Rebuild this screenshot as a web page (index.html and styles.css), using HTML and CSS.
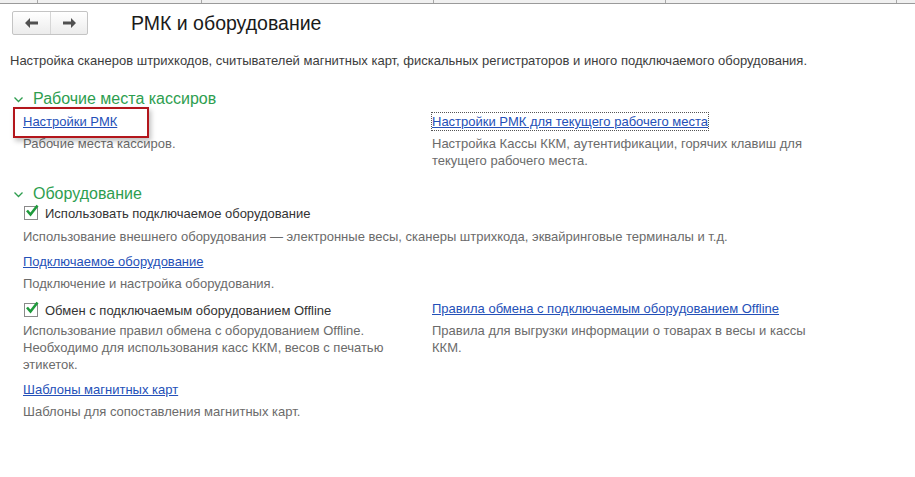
FILE: index.html
```html
<!DOCTYPE html>
<html lang="ru">
<head>
<meta charset="utf-8">
<title>РМК и оборудование</title>
<link rel="stylesheet" href="styles.css">
</head>
<body>
<div class="tabs">
  <div class="tab" style="width:37px"></div>
  <div class="tab" style="width:163px"></div>
  <div class="tab" style="width:231px"></div>
  <div class="tab" style="width:231px"></div>
  <div class="tab" style="width:230px"></div>
  <div class="tab tab-last"></div>
</div>

<div class="header">
  <div class="nav">
    <button class="nav-btn" type="button">
      <svg width="14" height="10" viewBox="0 0 14 10"><path d="M0 5 L5 0 L5 3.5 L13 3.5 L13 6.5 L5 6.5 L5 10 Z" fill="#505050"/></svg>
    </button>
    <button class="nav-btn" type="button">
      <svg width="14" height="10" viewBox="0 0 14 10"><path d="M14 5 L9 0 L9 3.5 L1 3.5 L1 6.5 L9 6.5 L9 10 Z" fill="#505050"/></svg>
    </button>
  </div>
  <h1 class="title">РМК и оборудование</h1>
</div>

<p class="intro">Настройка сканеров штрихкодов, считывателей магнитных карт, фискальных регистраторов и иного подключаемого оборудования.</p>

<div class="section">
  <div class="section-head">
    <svg class="chevron" width="9" height="6" viewBox="0 0 9 6"><path d="M0.5 0.5 L4.5 4.5 L8.5 0.5" fill="none" stroke="#2e9e4f" stroke-width="1.3"/></svg>
    <span>Рабочие места кассиров</span>
  </div>
  <div class="grid first-grid">
    <div class="item">
      <a class="link marked" href="#">Настройки РМК<span class="mark"></span></a>
      <div class="desc">Рабочие места кассиров.</div>
    </div>
    <div class="item">
      <a class="link focused" href="#">Настройки РМК для текущего рабочего места</a>
      <div class="desc">Настройка Кассы ККМ, аутентификации, горячих клавиш для текущего рабочего места.</div>
    </div>
  </div>
</div>

<div class="section second">
  <div class="section-head">
    <svg class="chevron" width="9" height="6" viewBox="0 0 9 6"><path d="M0.5 0.5 L4.5 4.5 L8.5 0.5" fill="none" stroke="#2e9e4f" stroke-width="1.3"/></svg>
    <span>Оборудование</span>
  </div>
  <div class="grid second-grid">
    <div class="item wide">
      <label class="check"><span class="box"><svg width="14" height="13" viewBox="0 0 14 13"><path d="M2 6.5 L5.5 10.5 L12.5 1.5" fill="none" stroke="#1f9a3c" stroke-width="2.6"/></svg></span>Использовать подключаемое оборудование</label>
      <div class="desc desc-check">Использование внешнего оборудования — электронные весы, сканеры штрихкода, эквайринговые терминалы и т.д.</div>
    </div>
    <div class="item wide">
      <a class="link" href="#">Подключаемое оборудование</a>
      <div class="desc">Подключение и настройка оборудования.</div>
    </div>
    <div class="item">
      <label class="check"><span class="box"><svg width="14" height="13" viewBox="0 0 14 13"><path d="M2 6.5 L5.5 10.5 L12.5 1.5" fill="none" stroke="#1f9a3c" stroke-width="2.6"/></svg></span>Обмен с подключаемым оборудованием Offline</label>
      <div class="desc desc-check2">Использование правил обмена с оборудованием Offline. Необходимо для использования касс ККМ, весов с печатью этикеток.</div>
    </div>
    <div class="item">
      <a class="link right-link" href="#">Правила обмена с подключаемым оборудованием Offline</a>
      <div class="desc">Правила для выгрузки информации о товарах в весы и кассы ККМ.</div>
    </div>
    <div class="item wide">
      <a class="link" href="#">Шаблоны магнитных карт</a>
      <div class="desc">Шаблоны для сопоставления магнитных карт.</div>
    </div>
  </div>
</div>
</body>
</html>
```

FILE: styles.css
```css
body {
    margin: 0;
    background: #ffffff;
    color: #333333;
    font-family: "Liberation Sans", Arial, sans-serif;
    font-size: 13px;
    line-height: 17px;
}

.tabs {
    display: flex;
    height: 3px;
    background: #f0f0f0;
    border-bottom: 1px solid #9a9a9a;
}

.tab {
    border-right: 1px solid #a8a8a8;
    flex: none;
}

.tab-last {
    flex: 1;
    border-right: none;
}

.header {
    display: flex;
    align-items: center;
    padding: 7px 0 0 12px;
    height: 24px;
}

.nav {
    display: flex;
    border: 1px solid #c4c4c4;
    border-radius: 2px;
    height: 22px;
    background: linear-gradient(#ffffff, #ececec);
}

.nav-btn {
    width: 37px;
    height: 22px;
    border: none;
    background: transparent;
    padding: 0;
    display: flex;
    align-items: center;
    justify-content: center;
}

.nav-btn + .nav-btn {
    border-left: 1px solid #d6d6d6;
}

.title {
    margin: 0 0 0 43px;
    font-size: 19.5px;
    font-weight: normal;
    color: #1a1a1a;
    line-height: 24px;
}

.intro {
    margin: 17px 0 0 10px;
    color: #3c3c3c;
}

.section {
    margin-top: 20px;
    padding-left: 14px;
}

.section.second {
    margin-top: 15px;
}

.section-head {
    display: flex;
    align-items: center;
    color: #2e9e4f;
    font-size: 16px;
    line-height: 20px;
}

.chevron {
    margin-right: 10px;
    margin-top: 2px;
}

.grid {
    display: grid;
    grid-template-columns: 400px 382px;
    column-gap: 9px;
    row-gap: 8px;
    padding-left: 9px;
    margin-top: 3px;
}

.first-grid {
    margin-top: 4px;
}

.second-grid {
    margin-top: -1px;
}

.item.wide {
    grid-column: 1 / span 2;
}

.link {
    color: #2450b8;
    text-decoration: underline;
    display: inline-block;
    position: relative;
}

.focused {
    outline: 1px dotted #555555;
}

.mark {
    position: absolute;
    left: -10px;
    top: -6px;
    width: 132px;
    height: 27px;
    border: 2px solid #b3161c;
    box-shadow: 2px 3px 5px rgba(0, 0, 0, 0.25);
}

.desc {
    margin-top: 5px;
    color: #6b6b6b;
}

.desc-check {
    margin-top: 5px;
}

.desc-check2 {
    margin-top: 2px;
}

.check {
    display: flex;
    align-items: center;
    height: 20px;
    color: #333333;
}

.box {
    width: 12px;
    height: 12px;
    border: 1px solid #8a8a8a;
    margin: 0 7px 0 1px;
    position: relative;
    background: #ffffff;
}

.box svg {
    position: absolute;
    left: 0;
    top: -3px;
}
```
